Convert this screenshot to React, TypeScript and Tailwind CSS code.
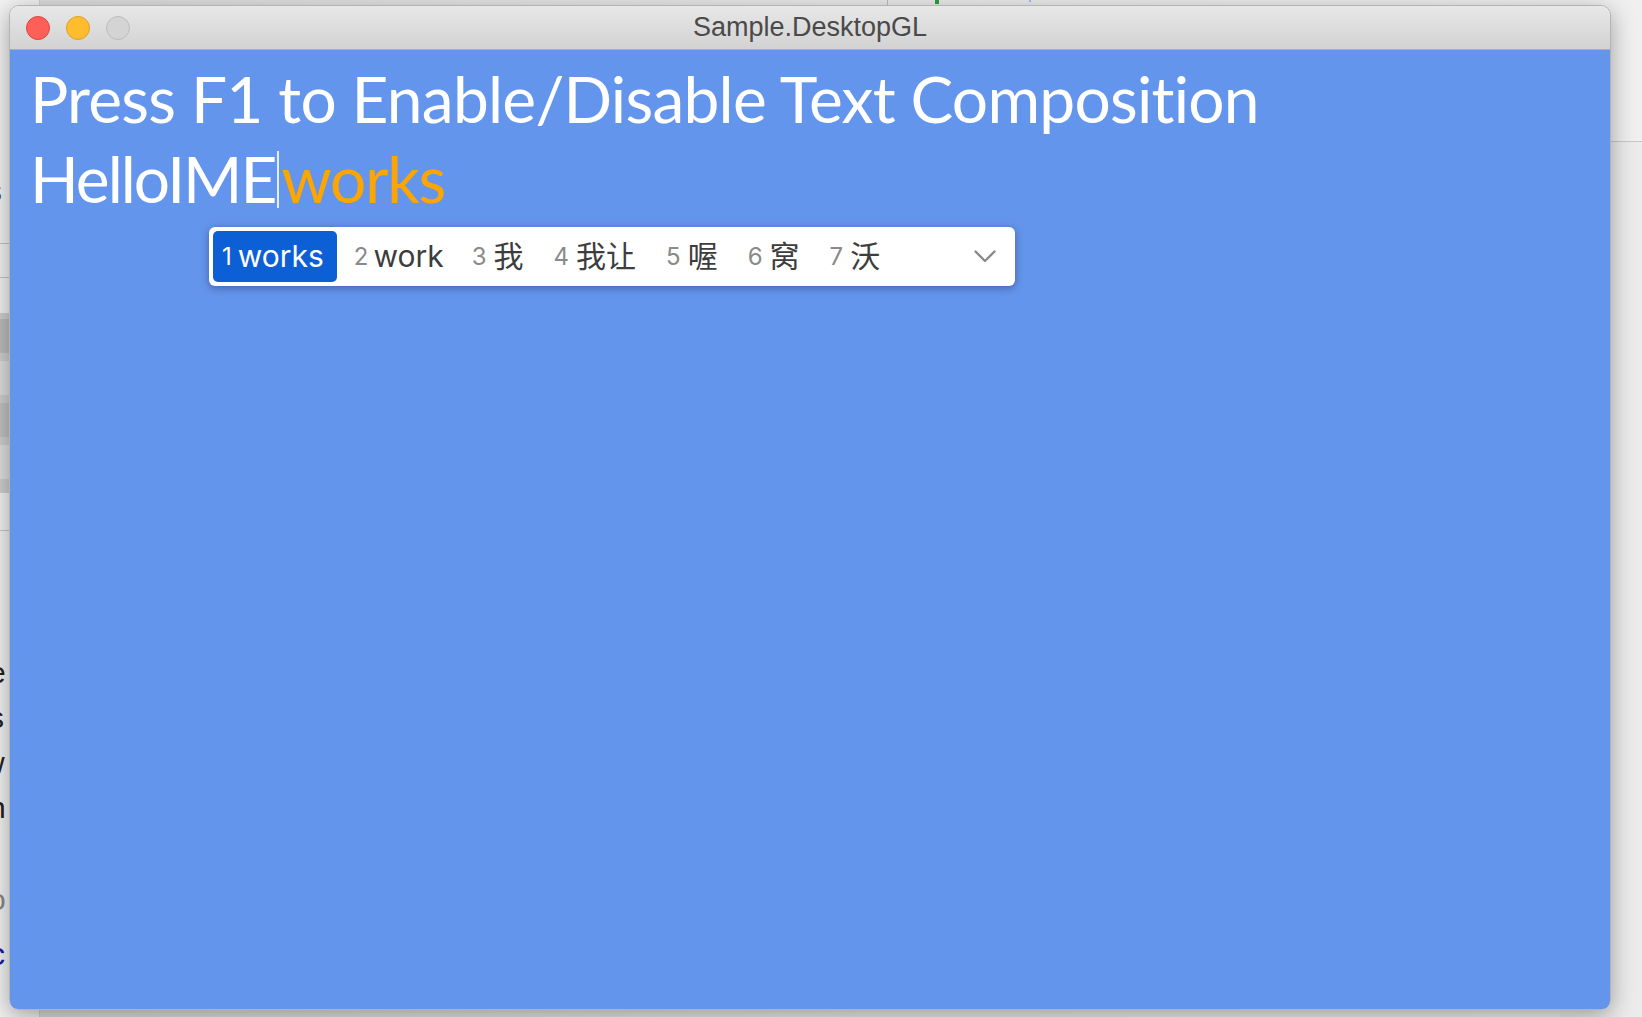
const candidates = [
    { n: '1', w: 'works' },
    { n: '2', w: 'work' },
    { n: '3', w: '我' },
    { n: '4', w: '我让' },
    { n: '5', w: '喔' },
    { n: '6', w: '窝' },
    { n: '7', w: '沃' },
]

/* ─── Desktop behind the window ───────────────────────────────────── */
const BackgroundWindows = () => (
    <>
        {/* document window peeking out on the left */}
        <div className="absolute left-0 top-0 w-[40px] h-[1017px] bg-[#f2f2f2] border-r border-[#d0d0d0]">
            <div className="absolute left-0 top-[243px] w-full h-px bg-[#c4c4c4]" />
            <div className="absolute left-0 top-[277px] w-full h-px bg-[#c4c4c4]" />
            <div className="absolute left-0 top-[313px] w-full h-[180px] bg-[#cfcfcf] flex flex-col gap-[8px] py-[6px]">
                <div className="h-[34px] bg-[#bdbdbd]" />
                <div className="h-[34px] bg-[#dedede]" />
                <div className="h-[34px] bg-[#c2c2c2]" />
                <div className="h-[34px] bg-[#e0e0e0]" />
            </div>
            <div className="absolute left-0 top-[530px] w-full h-px bg-[#c8c8c8]" />
            <div className="absolute left-[-13px] top-[168px] text-[30px] text-[#555]" style={{ fontFamily: '"Liberation Sans", sans-serif' }}>s</div>
            <div className="absolute left-[-11px] top-[650px] flex flex-col text-[30px] leading-[45px] text-[#222]" style={{ fontFamily: '"Liberation Sans", sans-serif' }}>
                <span>e</span>
                <span>s</span>
                <span className="ml-[-6px]">w</span>
                <span>n</span>
            </div>
            <div className="absolute left-[-11px] top-[877px] text-[30px] text-[#888]" style={{ fontFamily: '"Liberation Sans", sans-serif' }}>o</div>
            <div className="absolute left-[-11px] top-[930px] text-[32px] text-[#1a1aa6]" style={{ fontFamily: '"Liberation Sans", sans-serif' }}>c</div>
        </div>
        {/* window on the right */}
        <div className="absolute left-[1560px] top-[141px] w-[82px] h-[876px] bg-[#ececec] border-t border-[#c8c8c8]" />
        {/* top strip */}
        <div className="absolute left-[887px] top-0 w-px h-[5px] bg-[#bcbcbc]" />
        <div className="absolute left-[935px] top-0 w-[4px] h-[4px] bg-[#2ea043]" />
        <div className="absolute left-[1029px] top-0 w-[2px] h-[2px] bg-[#9cc0f0]" />
    </>
)

const TrafficLights = () => (
    <div className="flex items-center gap-[16px] pl-[16px]">
        <div className="w-[24px] h-[24px] rounded-full bg-[#fe5f57] border border-[#e0443e]" />
        <div className="w-[24px] h-[24px] rounded-full bg-[#febc2e] border border-[#dea123]" />
        <div className="w-[24px] h-[24px] rounded-full bg-[#d4d4d4] border border-[#bdbdbd]" />
    </div>
)

const Chevron = () => (
    <svg width={22} height={13} viewBox="0 0 22 13" fill="none" stroke="#8a8a8a" strokeWidth={2.4} strokeLinecap="round" strokeLinejoin="round">
        <path d="M1.5 1.5l9.5 9.5 9.5-9.5" />
    </svg>
)

const itemClass = (i: number) => {
    if (i === 0) return 'h-full flex items-center gap-[6px] pl-[9px] pr-[13px] rounded-[5px] bg-[#0d5fd6] text-white'
    if (i === 1) return 'h-full flex items-center gap-[5px] pl-[9px] pr-[11px] text-[#3d3d3d]'
    return 'h-full flex items-center gap-[7px] pl-[9px] pr-[13px] text-[#3d3d3d]'
}

const CandidateWindow = () => (
    <div className="absolute left-[199px] top-[177px] w-[806px] h-[59px] bg-white rounded-[6px] shadow-[0_2px_8px_rgba(0,0,40,0.35)] flex items-center p-[4px]">
        <div className="flex items-center gap-[8px] h-full">
            {candidates.map((c, i) => (
                <div key={c.n} className={itemClass(i)}>
                    <span className={i === 0 ? 'text-[24px] text-white' : 'text-[24px] text-[#8a8a8a]'}>{c.n}</span>
                    <span className="text-[30px]">{c.w}</span>
                </div>
            ))}
        </div>
        <div className="ml-auto mr-[15px] flex items-center">
            <Chevron />
        </div>
    </div>
)

export default function App() {
    return (
        <div className="relative w-[1642px] h-[1017px] overflow-hidden bg-gradient-to-r from-[#dcdcdc] via-[#ebebeb] to-[#f0f0f0]">
            <BackgroundWindows />

            {/* ── Game window ── */}
            <div className="absolute left-[9px] top-[5px] w-[1602px] h-[1005px] flex flex-col rounded-[10px] shadow-[0_6px_24px_rgba(0,0,0,0.35)] border border-[#b4b4b4]">
                <div className="relative h-[44px] flex items-center rounded-t-[10px] bg-gradient-to-b from-[#e8e8e8] to-[#d2d2d2] border-b border-[#b0b0b0]">
                    <TrafficLights />
                    <div className="absolute inset-0 flex items-center justify-center text-[27px] text-[#4a4a4a]" style={{ fontFamily: '"Liberation Sans", Arial, sans-serif' }}>
                        Sample.DesktopGL
                    </div>
                </div>

                <div className="relative flex-1 bg-[#6495ed] rounded-b-[8px]" style={{ fontFamily: 'Inter, "Noto Sans CJK SC", sans-serif' }}>
                    <div className="pt-[9px] pl-[20px] text-white text-[64px] leading-[80px] tracking-[-0.75px] [font-variant-ligatures:none]" style={{ fontFamily: 'Lato, "Noto Sans", sans-serif' }}>
                        <div>Press F1 to Enable/Disable Text Composition</div>
                        <div className="flex items-center">
                            <span className="tracking-[-2px]">HelloIME</span>
                            <span className="w-[2px] h-[57px] bg-[#e6edff] mx-[2px]" />
                            <span className="text-[#ffa500] tracking-[-1.2px]">works</span>
                        </div>
                    </div>
                    <CandidateWindow />
                </div>
            </div>
        </div>
    )
}
